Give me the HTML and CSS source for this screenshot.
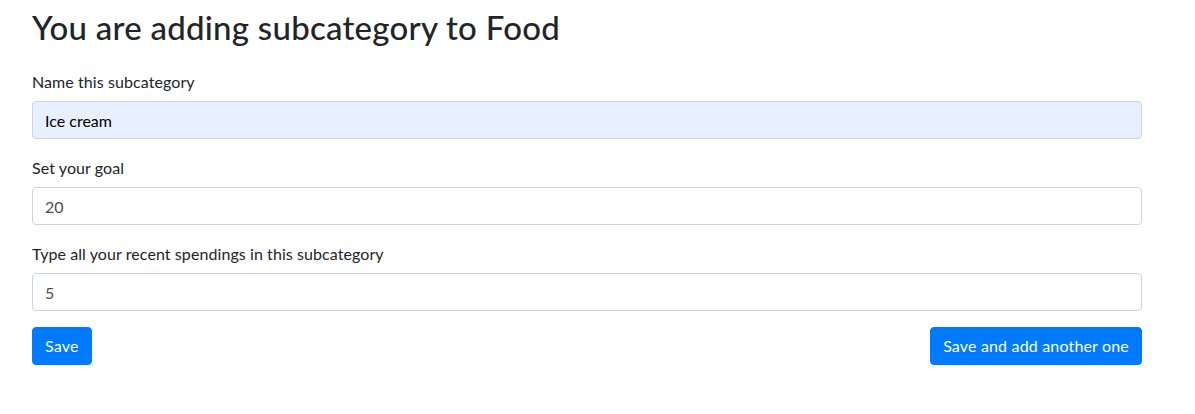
FILE: index.html
```html
<!DOCTYPE html>
<html>
<head>
<meta charset="utf-8">
<link rel="stylesheet" href="styles.css">
</head>
<body>
<div class="container">
  <h2 class="title">You are adding subcategory to Food</h2>
  <form class="form">
    <div class="form-group">
      <label class="label">Name this subcategory</label>
      <input class="input input-filled" type="text" value="Ice cream">
    </div>
    <div class="form-group">
      <label class="label">Set your goal</label>
      <input class="input" type="text" value="20">
    </div>
    <div class="form-group">
      <label class="label">Type all your recent spendings in this subcategory</label>
      <input class="input" type="text" value="5">
    </div>
    <div class="actions">
      <button class="btn" type="button">Save</button>
      <button class="btn" type="button">Save and add another one</button>
    </div>
  </form>
</div>
</body>
</html>
```
FILE: styles.css
```css
html, body {
  margin: 0;
  padding: 0;
  background: #fff;
}
body {
  font-family: Lato, "Noto Sans", sans-serif;
  font-size: 16px;
  line-height: 24px;
  color: #212529;
}
.container {
  width: 1110px;
  margin-left: 32px;
  padding-top: 7px;
}
.title {
  margin: 0 0 22px 0;
  font-size: 33px;
  letter-spacing: 0.25px;
  font-weight: 500;
  line-height: 40px;
  color: #212529;
}
.form {
  margin: 0;
}
.form-group {
  margin-bottom: 16px;
}
.label {
  display: block;
  margin-bottom: 8px;
  padding-top: 1px;
  line-height: 23px;
  letter-spacing: 0.08px;
}
.input {
  display: block;
  box-sizing: border-box;
  width: 100%;
  height: 38px;
  padding: 6px 12px;
  font-family: inherit;
  font-size: 16px;
  line-height: 24px;
  color: #495057;
  background: #fff;
  border: 1px solid #ced4da;
  border-radius: 4px;
  outline: none;
}
.input-filled {
  background: #e8f0fe;
  color: #000;
}
.actions {
  display: flex;
  justify-content: space-between;
}
.btn {
  box-sizing: border-box;
  height: 38px;
  padding: 6px 12px;
  font-family: inherit;
  font-size: 16px;
  line-height: 24px;
  letter-spacing: 0.17px;
  color: #fff;
  background: #007bff;
  border: 1px solid #007bff;
  border-radius: 4px;
  cursor: pointer;
}
```
